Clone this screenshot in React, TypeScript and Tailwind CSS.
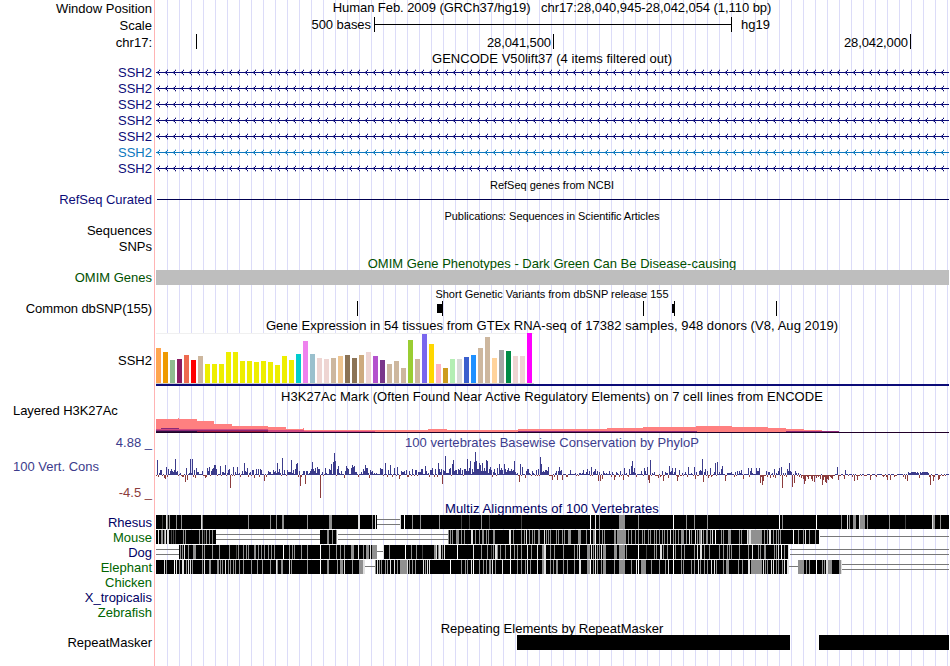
import React from "react";
import { clsx } from "clsx";

const NAVY = "#0c0c78";
const TRACK_X = 156;
const TRACK_W = 793;

// [height, colour] per tissue
const TISSUES: [number, string][] = [
    [35, "#ffa54f"], [31, "#ee9a00"], [23, "#8fbc8f"], [24, "#8b1c62"], [28, "#ee6a50"], [23, "#ff0000"],
    [27, "#cdb79e"], [19, "#eeee00"], [19, "#eeee00"], [19, "#eeee00"], [31, "#eeee00"], [31, "#eeee00"],
    [22, "#eeee00"], [22, "#eeee00"], [21, "#eeee00"], [22, "#eeee00"], [21, "#eeee00"], [18, "#eeee00"],
    [27, "#eeee00"], [23, "#eeee00"], [29, "#00cdcd"], [42, "#ee82ee"], [29, "#9ac0cd"], [25, "#eed5d2"],
    [24, "#eed5d2"], [25, "#cdb79e"], [27, "#eec591"], [28, "#8b7355"], [25, "#8b7355"], [28, "#cdaa7d"],
    [31, "#eed5d2"], [27, "#b452cd"], [23, "#7a378b"], [19, "#cdb79e"], [22, "#cdb79e"], [15, "#cdb79e"],
    [43, "#9acd32"], [24, "#cdb79e"], [49, "#7a67ee"], [39, "#ffd700"], [19, "#ffb6c1"], [15, "#cd9b1d"],
    [24, "#b4eeb4"], [24, "#d9d9d9"], [26, "#3a5fcd"], [28, "#1e90ff"], [35, "#cdb79e"], [46, "#cdb79e"],
    [25, "#ffd39b"], [33, "#a6a6a6"], [32, "#008b45"], [27, "#eed5d2"], [27, "#eed5d2"], [50, "#ff00ff"],
];

// x:height pairs
const PEAKS =
    "157:15 166:8 170:4 175:16 186:7 190:16 192:16 196:7 207:7 209:8 212:6 213:7 214:10 215:10 216:6 220:9 225:10 228:5 229:6 233:8 237:8 244:12 247:7 253:5 260:6 268:4 277:12 279:6 282:17 284:5 287:5 291:15 295:6 296:11 297:12 310:4 312:13 315:7 317:8 325:7 331:11 333:13 334:22 335:14 338:9 346:9 347:7 348:6 " +
    "351:7 352:10 353:8 354:9 361:3 365:10 366:7 367:7 380:7 381:6 382:6 385:12 388:5 390:10 394:7 397:8 406:5 412:6 425:9 432:7 435:6 438:12 441:6 445:19 449:6 450:7 452:11 453:15 458:6 460:7 462:5 467:16 469:7 470:14 472:6 474:13 475:23 476:14 479:12 480:10 482:12 484:7 486:15 487:14 490:8 497:7 499:11 501:7 504:11 505:6 508:7 514:14 520:11 522:8 540:18 541:11 548:8 " +
    "559:8 561:5 570:5 583:5 587:6 591:8 595:6 597:4 609:4 624:7 629:6 631:9 632:14 634:7 644:7 647:8 650:15 662:4 669:9 672:7 675:7 679:5 688:8 694:8 700:5 702:16 705:6 707:4 710:7 715:12 717:13 721:6 722:9 731:3 741:5 748:7 " +
    "751:7 756:7 758:4 759:7 774:6 778:4 779:7 781:8 787:6 788:4 789:12 837:8 845:5";
const DIPS =
    "164:3 165:4 185:7 187:5 195:3 205:3 230:13 254:3 264:6 300:11 305:9 320:23 344:3 369:3 399:4 407:2 442:9 492:2 519:7 525:3 " +
    "552:5 557:5 562:5 598:6 600:6 602:4 614:5 623:5 648:5 649:8 658:3 663:6 668:3 677:6 695:4 703:7 708:3 725:6 743:4 " +
    "760:8 762:10 763:6 770:3 775:3 782:13 792:12 794:8 804:9 805:6 812:6 814:7 822:10 823:5 825:7 826:8 827:4 828:5 838:5 844:4 854:6 857:5 870:5 887:5 890:5 905:4 907:6 919:3 930:10 933:6 938:5 939:4";

// x[shade][:width], shade is d (dark), l (light) or w (white), grey otherwise
const RHESUS =
    "162d 166l 167 169 176 181 201l 202 248 270 276 282:2 307 329:3 358l:2 372 375l 400l 404w 412 420 439 461d 469d 481 489d 521d 590w 595l 599 619:6 638 673w 686 694 707 779w 782 816w 841 847l 849 853:3 859l 860:5 867 889 905d 932l 933:2 940";
const MOUSE =
    "158l 161:2 164 165l 167l:2 171d 173d 175d 183 185 199 202 204d 206 209 212 327:2 332 336 " +
    "448 450 452 456:3 461 464 471l:2 475 479 482:2 486 488 493:2 509l:2 513 521 524 526l 529 532 534 538:2 544l 546 548 550 556 558 562 564 568:3 578:3 586 590w 593:2 595w 599 602 604 614:2 617:9 628 631 635 638 642 644 648 650 654 656 659 662 664 667 670l 673 675 678 681:3 " +
    "686 689l 691 695l 697 699:2 701l 703 706:2 710 712l 715w 721 723 728:3 739 741 747l 748 749l:2 751:11 764 767 769l:2 773 776 778 780 793w 798 803 805l 809 815";
const DOG =
    "180 182 184l 188 193:3 202 204 212 219 229 236d 238 243 246 248 254:2 258 261 264 268 271 274 283w 289 292 294 301 307 320w 329 336 340 344 351:3 358l 363 366:3 370l 372:5 383l 389 405w 411 416 " +
    "422d 434:2 436l 438 439l:2 442 444l 457w 473l 481 487 491d 493 495l:2 497 500 505 510l 514 517 521 527l 531 537l 542:2 544l:2 550 554 563 574 577 579l 587:3 591l 593 595l 597 599 601l 603:3 614:3 619:6 626 638w 646d 654 656 660l:2 663 667 673w 675 " +
    "681 684 694 697l 700l:2 704 709 719 723 727 729 731 739 748 752l 758 760 764:2 774 776 778l 781w 784 788l";
const ELEPHANT =
    "164l 166 174w 176l 179 182l:2 186 188l 190l 192 202 204l 209:2 217:2 220 222 225l 228 230 233 235 239 243 251 257 262 270 276l 277 281:2 289l 291 307 320w 327:2 337 340:3 344l 352 359:4 363l:2 375 377l 379 381 385 387 390l 394l 397 400:3 403:4 407l 409 412 415 " +
    "423l 425 427l 429l 450w 461 465 467 471l 473w 479 483 486 489:2 492l 495 502l 510w 517 521 525 527l 530 537l 542:2 544l:2 550 553 556:2 563 567 574 579l:2 587:3 590w 593 595l 597 601 603:3 614 619:6 631 636l 638w 641:5 651 659 665 668l 673w " +
    "681 683 691 694 698l 700 704 707 711l 714l 716 723 726:3 738 742 748l:2 751:11 763l 765 767 771l 773l 776 778 782 784l 787l:2 798:6 806 809 816w 822 824 826l:2 828:3 831 839:2 841l";

const SHADES: Record<string, string> = { d: "#444444", l: "#e0e0e0", w: "#ffffff", "": "#909090" };

interface RowProps {
    height: string;
    label?: string;
    labelClass?: string;
    children?: React.ReactNode;
}

function Row({ height, label, labelClass, children }: RowProps) {
    return (
        <div className={clsx("flex shrink-0", height)}>
            <div className={clsx("w-[152px] mr-[4px] shrink-0 whitespace-pre text-right", labelClass)}>{label}</div>
            <div className="w-[793px] shrink-0">{children}</div>
        </div>
    );
}

function Title({ className, children }: { className: string; children: React.ReactNode }) {
    return <div className={clsx("w-[792px] whitespace-pre text-center", className)}>{children}</div>;
}

function Canvas({ height, children }: { height: number; children: React.ReactNode }) {
    return (
        <svg
            className="block overflow-visible"
            width={TRACK_W}
            height={height}
            viewBox={`${TRACK_X} 0 ${TRACK_W} ${height}`}
            shapeRendering="crispEdges"
        >
            {children}
        </svg>
    );
}

function GeneLine({ color }: { color: string }) {
    let arms = "";
    let tips = "";
    for (let x = 157; x < 946; x += 8) {
        arms += `M${x + 1} 7h1v1h-1zM${x + 1} 9h1v1h-1zM${x + 2} 6h1v1h-1zM${x + 2} 10h1v1h-1z`;
        tips += `M${x + 2} 5h1v1h-1zM${x + 2} 11h1v1h-1zM${x} 7h1v1h-1zM${x} 9h1v1h-1z`;
    }
    return (
        <Canvas height={16}>
            <rect x={156} y={8} width={793} height={1} fill={color} />
            <path d={arms} fill={color} />
            <path d={tips} fill={color} opacity={0.3} />
        </Canvas>
    );
}

function parsePairs(text: string) {
    return new Map(text.split(" ").map((p) => p.split(":").map(Number) as [number, number]));
}

function Conservation() {
    const peaks = parsePairs(PEAKS);
    const dips = parsePairs(DIPS);
    let up = "";
    let down = "";
    let seed = 17;
    const rand = () => {
        seed = (seed * 16807) % 2147483647;
        return seed / 2147483647;
    };
    for (let x = 156; x < 949; x++) {
        const r = rand();
        const s = rand();
        let h = 0;
        if (peaks.has(x)) h = peaks.get(x)!;
        else if (dips.has(x)) h = -dips.get(x)!;
        else if (x >= 908 && x <= 928) h = s < 0.5 ? 3 : 2;
        else if (x > 800 && x < 835) h = r < 0.25 ? 1 : -1 - Math.floor(s * s * 4);
        else if (x > 834) h = r < 0.62 ? 1 : s < 0.7 ? -1 : -2;
        else if (x > 550) h = r < 0.3 ? -1 - Math.floor(s * 2) : 1 + Math.floor(s * s * 4);
        else if (x > 440) h = r < 0.1 ? -1 : 1 + Math.floor(s * 6);
        else h = r < 0.18 ? -1 - Math.floor(s * 1.6) : 1 + Math.floor(s * s * 6);
        if (h > 0) up += `M${x} ${25 - h}h1v${h}h-1z`;
        else down += `M${x} 25h1v${-h}h-1z`;
    }
    return (
        <Canvas height={50}>
            <path d={up} fill="#3c3c8c" />
            <path d={down} fill="#8c3c3c" />
        </Canvas>
    );
}

interface AlignmentProps {
    blocks: [number, number][];
    gaps?: [number, number, "single" | "double"][];
    stripes: string;
}

function Alignment({ blocks, gaps = [], stripes }: AlignmentProps) {
    return (
        <Canvas height={15}>
            {gaps.map(([from, to, kind]) => (
                <path
                    key={from}
                    d={kind === "single" ? `M${from} 6.5H${to}` : `M${from} 4.5H${to}M${from} 9.5H${to}`}
                    stroke="#787878"
                />
            ))}
            {blocks.map(([from, to]) => (
                <rect key={from} x={from} y={0} width={to - from} height={14} fill="#000" />
            ))}
            {stripes.split(" ").map((s) => {
                const [, x, shade, w] = /^(\d+)([dlw]?):?(\d*)$/.exec(s)!;
                return <rect key={s} x={x} y={0} width={w || 1} height={14} fill={SHADES[shade]} />;
            })}
        </Canvas>
    );
}

export default function App() {
    return (
        <div className="flex h-[666px] w-[950px] flex-col overflow-hidden font-['Liberation_Sans',Arial,sans-serif] text-[13px] text-black [background:linear-gradient(#ffb4b4,#ffb4b4)_154px_0/1px_100%_no-repeat,repeating-linear-gradient(to_right,#dcdcf8_0_1px,transparent_1px_12px)_167px_0/782px_100%_no-repeat,#fff]">
            <Row height="h-[17px]" label="Window Position" labelClass="leading-[17px]">
                <Title className="leading-[15px] tracking-[-0.06px]">{"Human Feb. 2009 (GRCh37/hg19)   chr17:28,040,945-28,042,054 (1,110 bp)"}</Title>
            </Row>
            <Row height="h-[17px]" label="Scale" labelClass="leading-[17px]">
                <div className="flex leading-[15px]">
                    <span className="w-[215px] text-right tracking-[-0.05px]">500 bases</span>
                    <div className="ml-[3px] flex h-[15px] w-[358px] items-center border-x border-black">
                        <div className="h-px w-full bg-black" />
                    </div>
                    <span className="ml-[9px]">hg19</span>
                </div>
            </Row>
            <Row height="h-[17px]" label="chr17:" labelClass="leading-[17px]">
                <div className="flex leading-[17px]">
                    <div className="ml-[40px] h-[15px] w-px bg-black" />
                    <span className="w-[354px] text-right tracking-[-0.1px]">28,041,500</span>
                    <div className="ml-[2px] h-[15px] w-px bg-black" />
                    <span className="w-[354px] text-right tracking-[-0.1px]">28,042,000</span>
                    <div className="ml-[2px] h-[15px] w-px bg-black" />
                </div>
            </Row>

            <Row height="h-[13px]">
                <Title className="leading-[15px] tracking-[0.04px]">GENCODE V50lift37 (4 items filtered out)</Title>
            </Row>
            {[0, 1, 2, 3, 4].map((i) => (
                <Row key={i} height="h-[16px]" label="SSH2" labelClass="leading-[17px] text-[#0c0c78]">
                    <GeneLine color={NAVY} />
                </Row>
            ))}
            <Row height="h-[16px]" label="SSH2" labelClass="leading-[17px] text-[#0c78be]">
                <GeneLine color="#0c78be" />
            </Row>
            <Row height="h-[16px]" label="SSH2" labelClass="leading-[17px] text-[#0c0c78]">
                <GeneLine color={NAVY} />
            </Row>

            <Row height="h-[16px]">
                <Title className="text-[11px] leading-[18px]">RefSeq genes from NCBI</Title>
            </Row>
            <Row height="h-[16px]" label="RefSeq Curated" labelClass="leading-[15px] text-[#0c0c78] tracking-[-0.03px]">
                <div className="ml-px pt-[7px]">
                    <div className="h-px bg-[#000050]" />
                </div>
            </Row>

            <Row height="h-[15px]">
                <Title className="text-[11px] leading-[16px] tracking-[-0.06px]">Publications: Sequences in Scientific Articles</Title>
            </Row>
            <Row height="h-[16px]" label="Sequences" labelClass="leading-[15px]" />
            <Row height="h-[16px]" label="SNPs" labelClass="leading-[15px]" />

            <Row height="h-[15px]">
                <Title className="leading-[17px] text-[#005000]">OMIM Gene Phenotypes - Dark Green Can Be Disease-causing</Title>
            </Row>
            <Row height="h-[15px]" label="OMIM Genes" labelClass="leading-[15px] text-[#005000]">
                <div className="relative h-[15px] bg-[#bebebe]" />
            </Row>

            <Row height="h-[16px]">
                <Title className="text-[11px] leading-[18px]">Short Genetic Variants from dbSNP release 155</Title>
            </Row>
            <Row height="h-[16px]" label="Common dbSNP(155)" labelClass="leading-[15px] tracking-[-0.1px]">
                <Canvas height={16}>
                    {[357, 442, 643, 674, 776].map((x) => (
                        <rect key={x} x={x} y={0} width={1} height={15} />
                    ))}
                    <rect x={437} y={3} width={5} height={9} />
                    <rect x={672} y={3} width={2} height={9} />
                </Canvas>
            </Row>

            <Row height="h-[16px]">
                <Title className="leading-[17px] tracking-[0.055px]">Gene Expression in 54 tissues from GTEx RNA-seq of 17382 samples, 948 donors (V8, Aug 2019)</Title>
            </Row>
            <Row height="h-[54px]" label="SSH2" labelClass="leading-[55px]">
                <div className="flex h-[51px] w-[378px] items-end gap-[2px] border-b border-[#cccccc] border-t border-t-[#f0f0f0] bg-white">
                    {TISSUES.map(([height, color], i) => (
                        <div key={i} className="w-[5px] shrink-0" style={{ height, backgroundColor: color }} />
                    ))}
                </div>
                <div className="h-[2px] bg-[#0c0c78]" />
            </Row>

            <Row height="h-[18px]">
                <Title className="leading-[19px] tracking-[0.05px]">H3K27Ac Mark (Often Found Near Active Regulatory Elements) on 7 cell lines from ENCODE</Title>
            </Row>
            <Row height="h-[29px]" label="Layered H3K27Ac" labelClass="pl-[13px] !text-left leading-[11px] tracking-[-0.05px]">
                <Canvas height={29}>
                    <path
                        d="M156 28V14H178V13H179V14H197V16H214V19H232V21H268V22H286V24H303V23H304V25H428V24H447V25H518V24H607V23H643V22H696V21H732V22H768V23H786V24H804V25H822V28z"
                        fill="#ff8080"
                    />
                    <path d="M156 24H268V25H156zM268 25H304V26H375V27H268z" fill="#d04880" />
                    <path d="M161 23H179V24H161zM156 25H268V26H156zM518 26H697V27H518zM786 26H839V27H786z" fill="#8c2878" />
                    <path d="M156 26H197V27H156z" fill="#301040" />
                    <path d="M197 26H268V27H197z" fill="#a01840" />
                    <rect x={156} y={27} width={793} height={1} fill="#200028" />
                </Canvas>
            </Row>

            <Row height="h-[16px]" label="4.88 _" labelClass="leading-[17px] text-[#3c3c8c]">
                <Title className="leading-[17px] tracking-[0.04px] text-[#3c3c8c]">100 vertebrates Basewise Conservation by PhyloP</Title>
            </Row>
            <div className="flex h-[50px] shrink-0">
                <div className="mr-[4px] w-[152px] shrink-0 text-[#3c3c8c]">
                    <div className="h-[34px] pl-[13px] leading-[33px]">100 Vert. Cons</div>
                    <div className="whitespace-pre text-right leading-[17px] text-[#8c3c3c]">-4.5 _</div>
                </div>
                <Conservation />
            </div>

            <Row height="h-[15px]">
                <Title className="leading-[17px] tracking-[0.08px] text-[#000064]">Multiz Alignments of 100 Vertebrates</Title>
            </Row>
            <Row height="h-[15px]" label="Rhesus" labelClass="leading-[15px] text-[#000064]">
                <Alignment blocks={[[156, 377], [400, 949]]} gaps={[[377, 400, "double"]]} stripes={RHESUS} />
            </Row>
            <Row height="h-[15px]" label="Mouse" labelClass="leading-[15px] text-[#006400]">
                <Alignment
                    blocks={[[156, 216], [320, 337], [448, 819]]}
                    gaps={[[216, 320, "double"], [338, 448, "double"], [820, 949, "single"]]}
                    stripes={MOUSE}
                />
            </Row>
            <Row height="h-[15px]" label="Dog" labelClass="leading-[15px] text-[#000064]">
                <Alignment
                    blocks={[[179, 377], [384, 789]]}
                    gaps={[[156, 179, "double"], [377, 383, "single"], [790, 949, "double"]]}
                    stripes={DOG}
                />
            </Row>
            <Row height="h-[15px]" label="Elephant" labelClass="leading-[15px] text-[#006400]">
                <Alignment
                    blocks={[[156, 365], [375, 789], [798, 842]]}
                    gaps={[[365, 375, "single"], [789, 798, "single"], [842, 949, "double"]]}
                    stripes={ELEPHANT}
                />
            </Row>
            <Row height="h-[15px]" label="Chicken" labelClass="leading-[15px] text-[#006400]" />
            <Row height="h-[15px]" label="X_tropicalis" labelClass="leading-[15px] text-[#000064]" />
            <Row height="h-[15px]" label="Zebrafish" labelClass="leading-[15px] text-[#006400]" />

            <Row height="h-[15px]">
                <Title className="leading-[17px]">Repeating Elements by RepeatMasker</Title>
            </Row>
            <Row height="h-[31px]" label="RepeatMasker" labelClass="leading-[15px]">
                <div className="flex h-[15px] justify-end gap-[29px]">
                    <div className="w-[273px] bg-black" />
                    <div className="w-[130px] bg-black" />
                </div>
            </Row>
        </div>
    );
}
